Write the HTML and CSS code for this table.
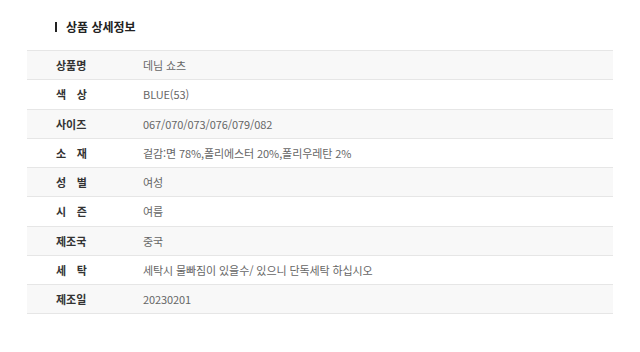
FILE: index.html
```html
<!DOCTYPE html>
<html lang="ko">
<head>
<meta charset="utf-8">
<link rel="stylesheet" href="styles.css">
</head>
<body>
<div class="wrap">
  <h2 class="title"><span class="bar"></span>상품 상세정보</h2>
  <table class="spec">
    <tr class="odd"><th><span class="lbl">상품명</span></th><td>데님 쇼츠</td></tr>
    <tr><th><span class="lbl">색 상</span></th><td>BLUE(53)</td></tr>
    <tr class="odd"><th><span class="lbl">사이즈</span></th><td>067/070/073/076/079/082</td></tr>
    <tr><th><span class="lbl">소 재</span></th><td>겉감:면 78%,폴리에스터 20%,폴리우레탄 2%</td></tr>
    <tr class="odd"><th><span class="lbl">성 별</span></th><td>여성</td></tr>
    <tr><th><span class="lbl">시 즌</span></th><td>여름</td></tr>
    <tr class="odd"><th><span class="lbl">제조국</span></th><td>중국</td></tr>
    <tr><th><span class="lbl">세 탁</span></th><td>세탁시 물빠짐이 있을수/ 있으니 단독세탁 하십시오</td></tr>
    <tr class="odd"><th><span class="lbl">제조일</span></th><td>20230201</td></tr>
  </table>
</div>
</body>
</html>
```

FILE: styles.css
```css
html, body {
  margin: 0;
  padding: 0;
  background: #fff;
}
body {
  font-family: "Noto Sans CJK KR", "Noto Sans", sans-serif;
  color: #333;
}
.wrap {
  padding: 18px 27px 0 27px;
  width: 586px;
}
.title {
  margin: 0 0 15px 0;
  padding-left: 28px;
  display: flex;
  align-items: center;
  font-size: 12px;
  font-weight: 700;
  color: #222;
  line-height: 17px;
}
.bar {
  display: inline-block;
  width: 2px;
  height: 10px;
  background: #222;
  margin-right: 9px;
}
.spec {
  width: 100%;
  border-collapse: collapse;
  border-top: 1px solid #e6e6e6;
}
.spec tr {
  border-bottom: 1px solid #e6e6e6;
  height: 29.25px;
}
.spec tr.odd {
  background: #f8f8f8;
}
.spec th {
  width: 116px;
  padding: 0 0 0 29px;
  text-align: left;
  font-weight: 700;
  font-size: 11px;
  color: #333;
  box-sizing: border-box;
}
.lbl {
  display: inline-block;
  width: 31px;
  text-align: justify;
  text-align-last: justify;
}
.spec td {
  padding: 0;
  font-size: 11px;
  color: #666;
  letter-spacing: -0.1px;
}
```
